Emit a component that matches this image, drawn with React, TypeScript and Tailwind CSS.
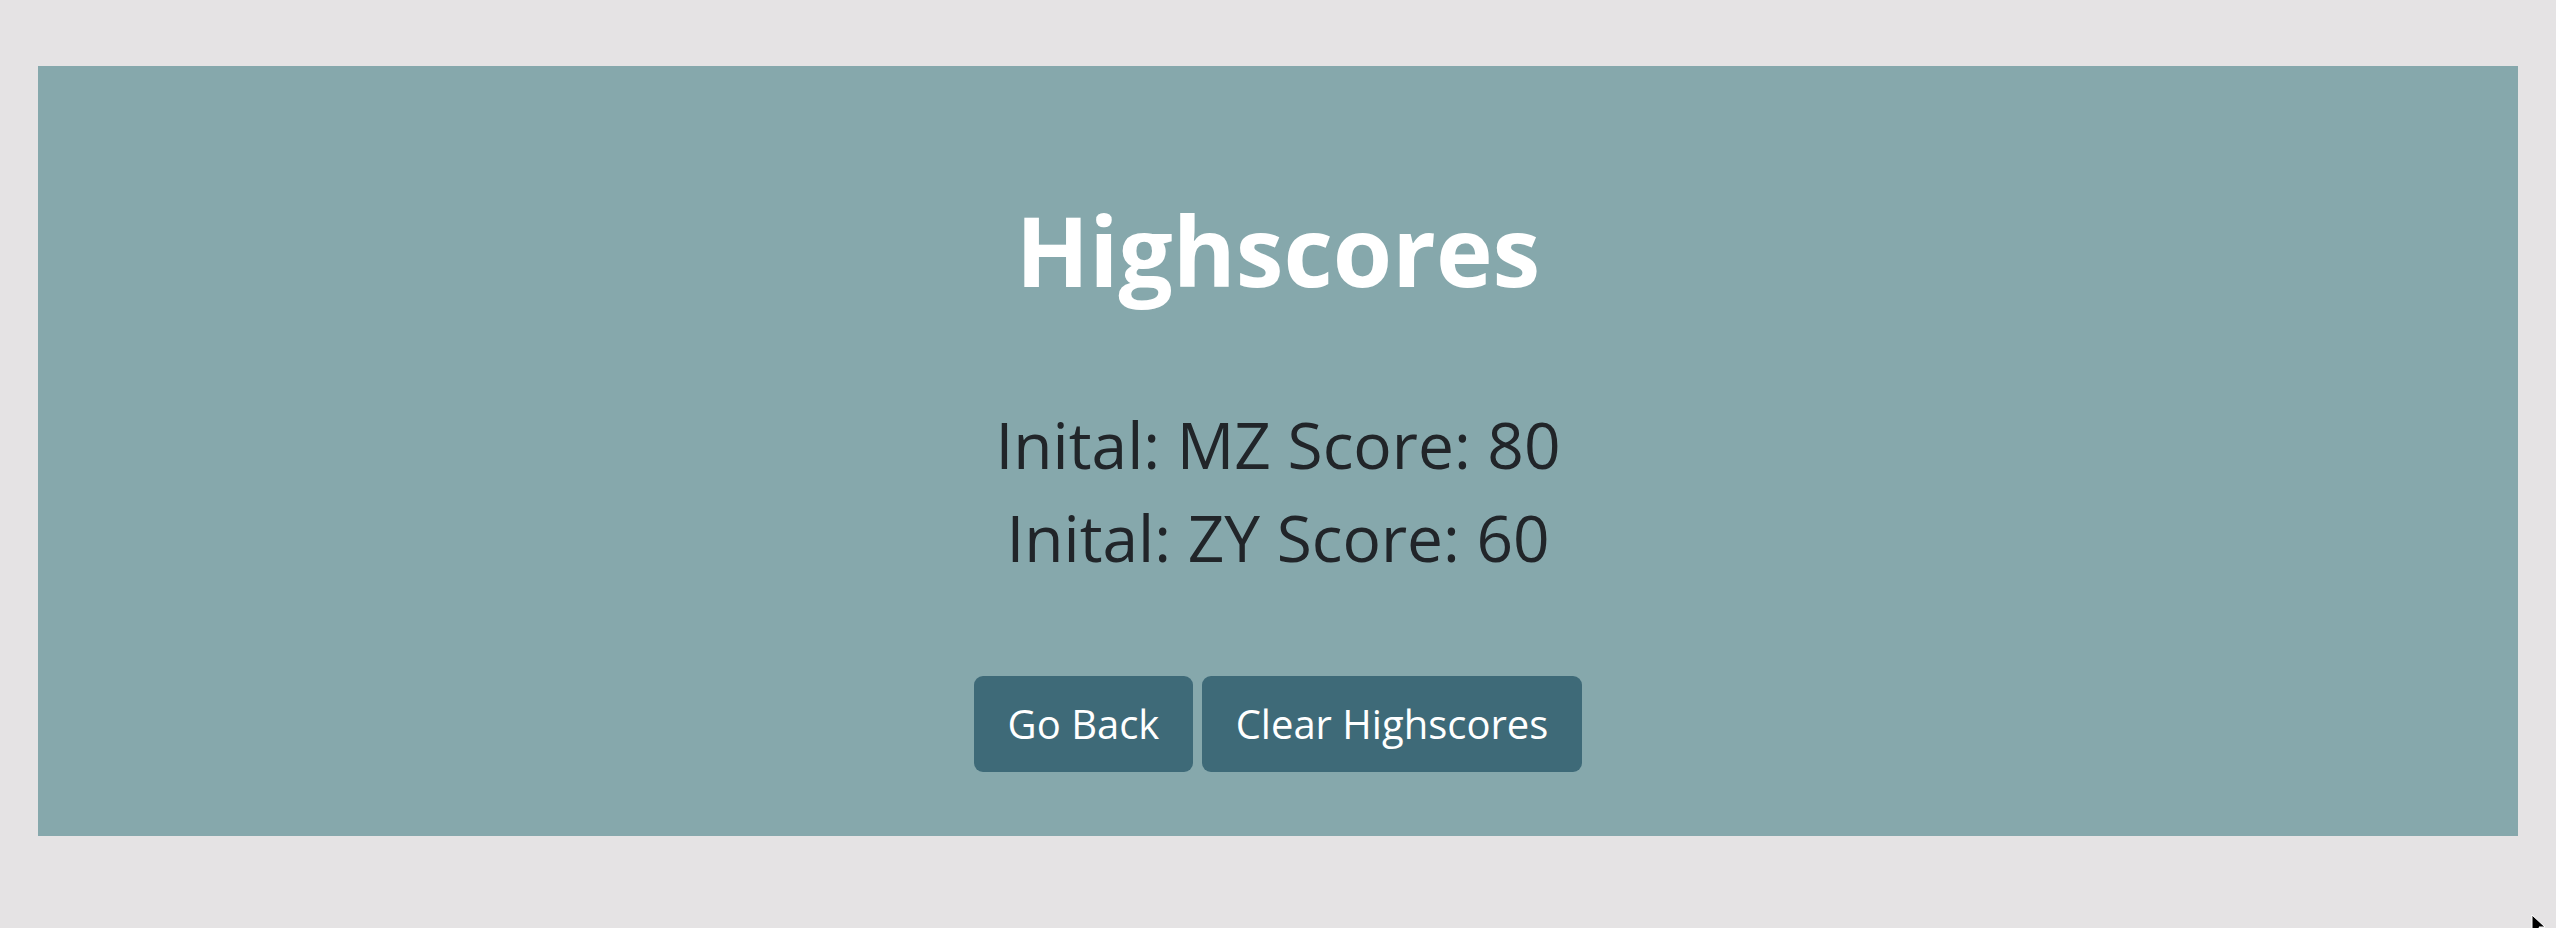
import React from "react";

export default function App() {
  return (
    <div className="relative w-[2556px] h-[928px] bg-[#e5e3e4] overflow-hidden" style={{ fontFamily: '"Open Sans", sans-serif' }}>
      <div className="ml-[38px] mt-[66px] w-[2480px] h-[770px] bg-[#86a8ac] flex flex-col items-center pt-[126px]">
        <h1 className="text-[96px] leading-[115px] font-bold text-white m-0 whitespace-nowrap">Highscores</h1>
        <div className="mt-[91px] flex flex-col items-center text-[#212529] text-[64px] leading-[93px] whitespace-nowrap">
          <div>Inital: MZ Score: 80</div>
          <div>Inital: ZY Score: 60</div>
        </div>
        <div className="mt-[92px] flex gap-[9px]">
          <button className="h-[96px] w-[219px] rounded-[9px] bg-[#3e6a78] text-white text-[40px] flex items-center justify-center whitespace-nowrap">Go Back</button>
          <button className="h-[96px] w-[380px] rounded-[9px] bg-[#3e6a78] text-white text-[40px] flex items-center justify-center whitespace-nowrap">Clear Highscores</button>
        </div>
      </div>
      <svg className="absolute left-[2531px] top-[914px]" width="16" height="22" viewBox="0 0 16 22">
        <path d="M1 1 L1 18 L5 14 L8 21 L11 20 L8 13 L14 13 Z" fill="#000" stroke="#fff" strokeWidth="1" />
      </svg>
    </div>
  );
}
